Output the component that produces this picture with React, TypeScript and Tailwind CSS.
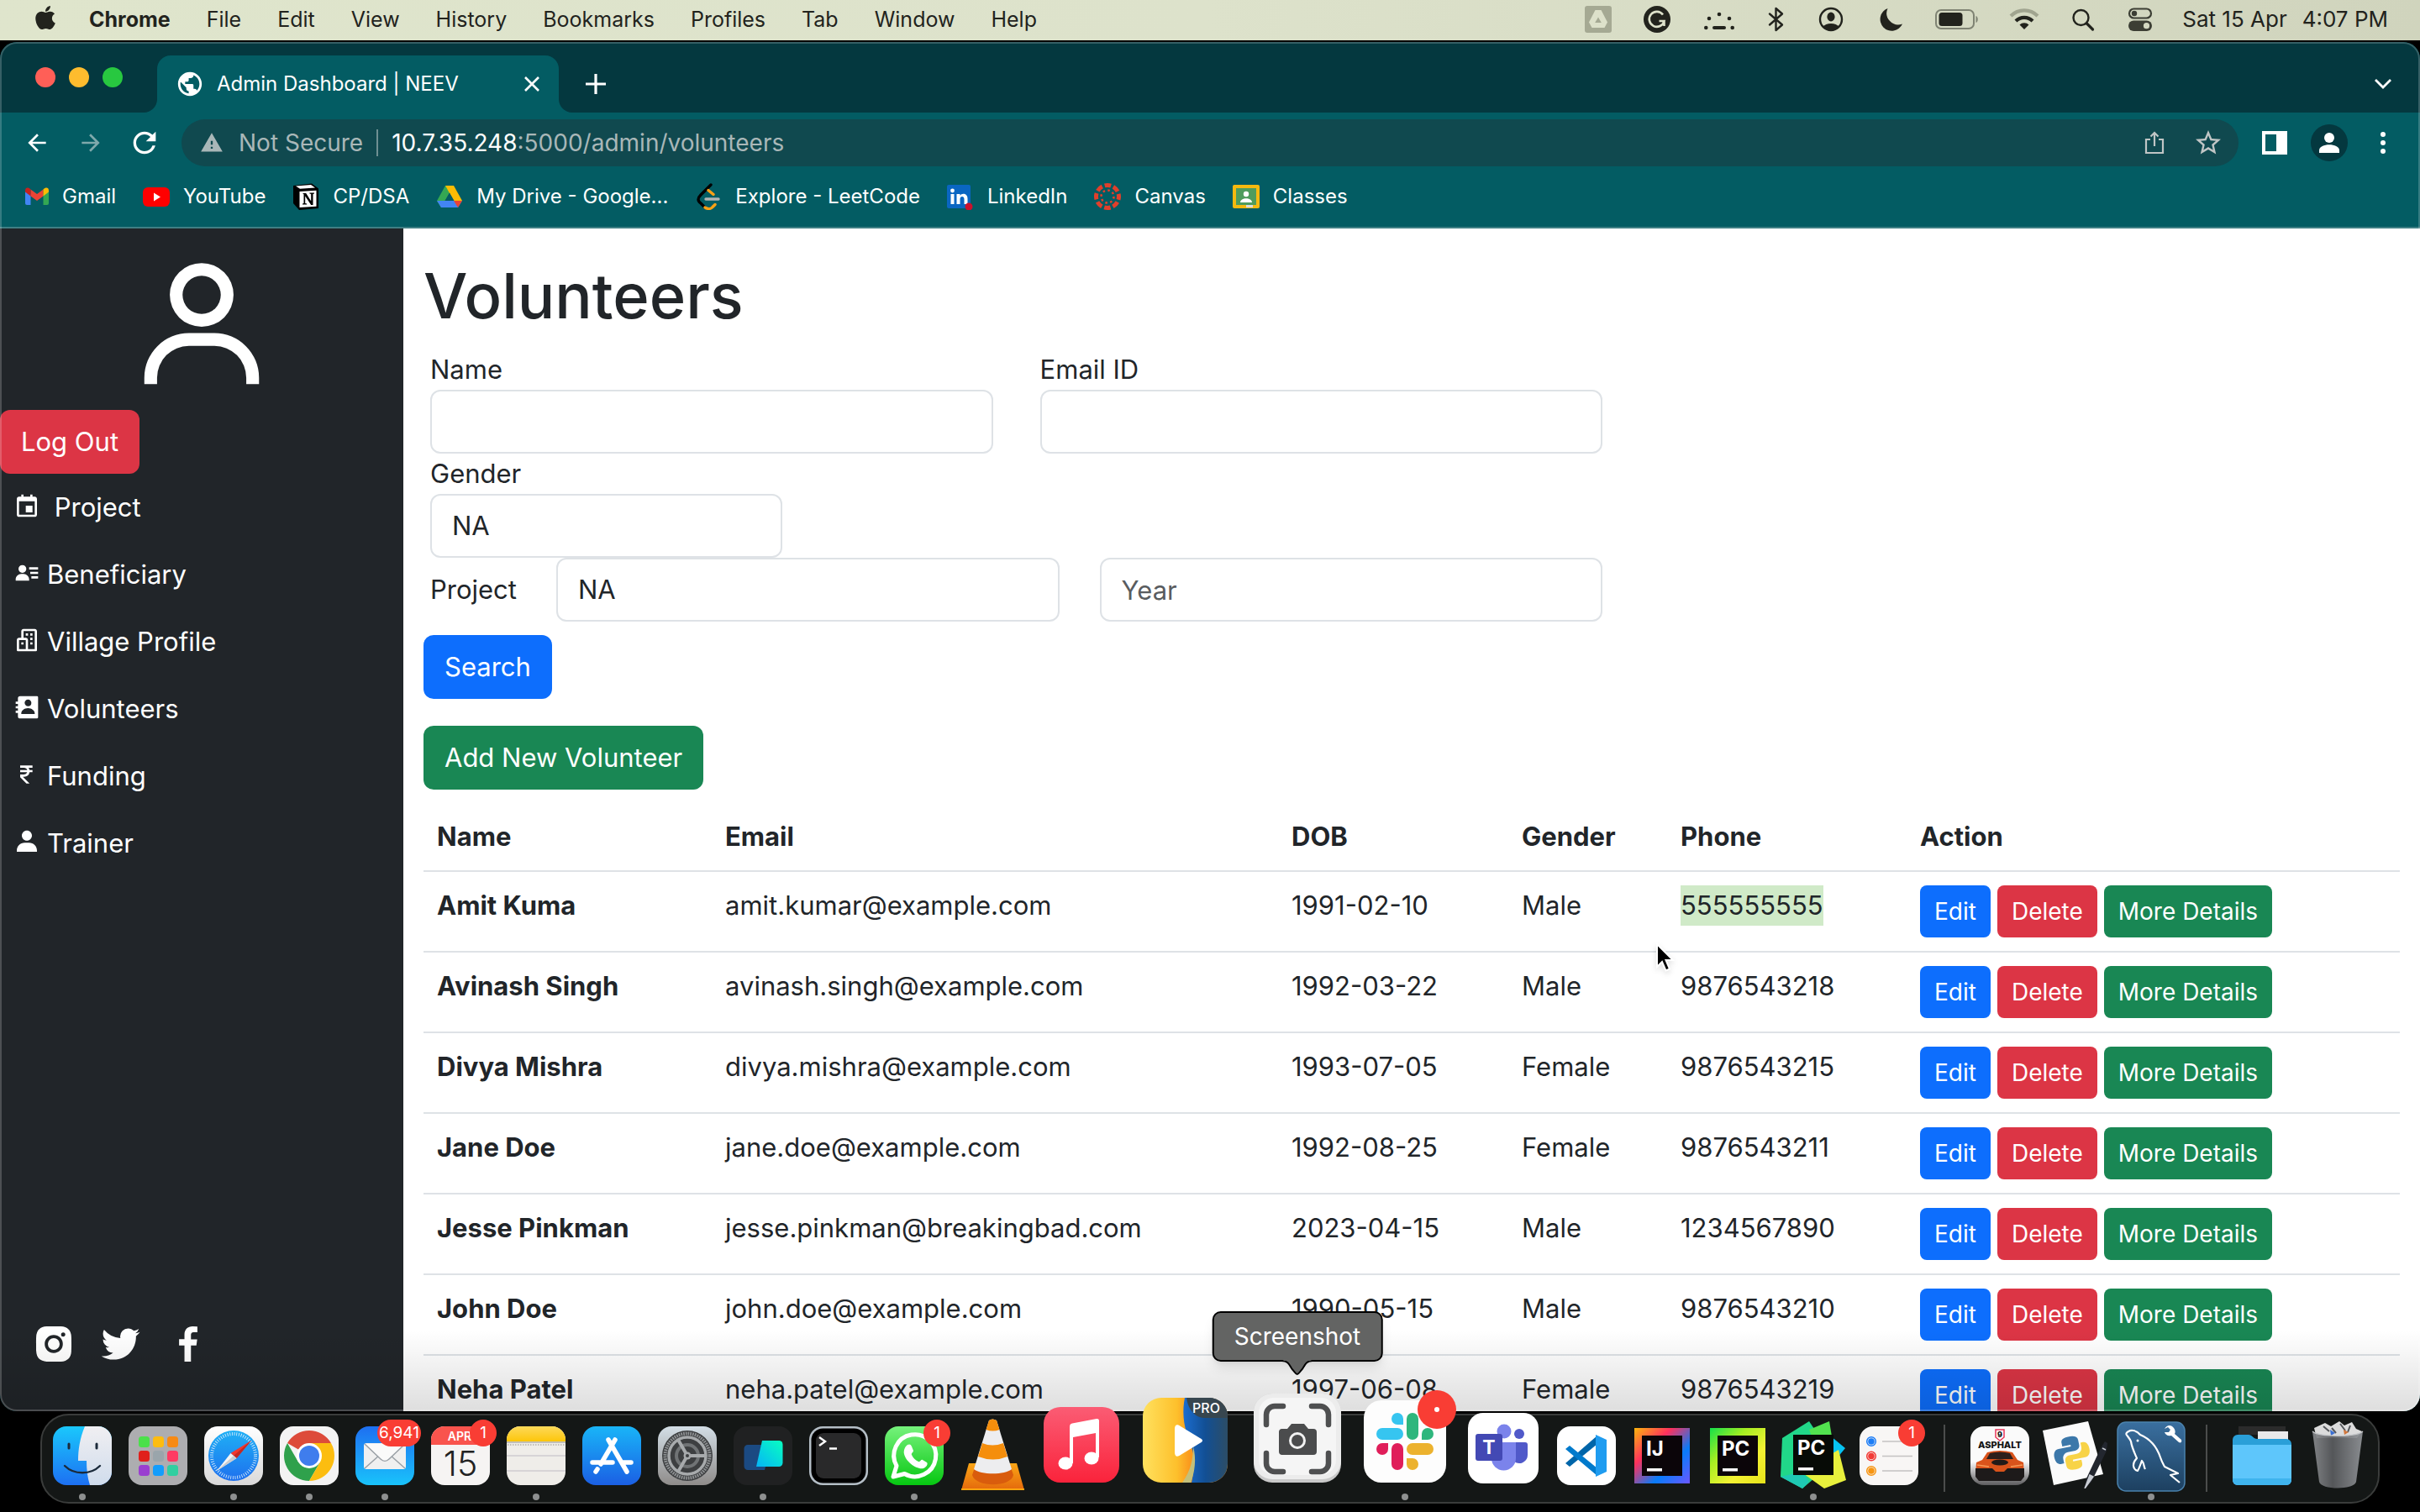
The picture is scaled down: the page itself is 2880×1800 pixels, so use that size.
import React from "react";
import {
  BiBuildings,
  BiCalendarEvent,
  BiLogoFacebook,
  BiLogoInstagramAlt,
  BiLogoTwitter,
  BiRupee,
  BiSolidContact,
  BiSolidUser,
  BiSolidUserDetail,
  BiUser,
} from "react-icons/bi";
import { FaApple } from "react-icons/fa";
import {
  MdArrowBack,
  MdArrowForward,
  MdRefresh,
  MdStarOutline,
  MdWarning,
  MdPublic,
} from "react-icons/md";

/* ---------- Menu bar ---------- */

const menus = ["File", "Edit", "View", "History", "Bookmarks", "Profiles", "Tab", "Window", "Help"];

function StatusIcons() {
  return (
    <>
      <svg className="h-8 w-8" viewBox="0 0 32 32" aria-hidden="true">
        <rect width="32" height="32" rx="3" fill="#a5a993" />
        <path d="M12.500 5h7L27 19.500l-3.500 6.500h-15L5 19.500z" fill="#dde1ca" />
        <path d="M16 13.500l3.800 6.500h-7.600z" fill="#a5a993" />
      </svg>
      <svg className="ml-[38px] h-8 w-8" viewBox="0 0 32 32" aria-hidden="true">
        <circle cx="16" cy="16" r="16" fill="#22231d" />
        <path d="M23 10.500A9 9 0 1 0 24.500 18h-6M24.500 18v6" fill="none" stroke="#dde1ca" strokeWidth="2.600" />
      </svg>
      <svg className="ml-10 h-8 w-9" viewBox="0 0 36 32" fill="#22231d" aria-hidden="true">
        <circle cx="18" cy="10" r="2.300" />
        <circle cx="6" cy="15" r="2.300" />
        <circle cx="30" cy="15" r="2.300" />
        <circle cx="2.300" cy="26" r="2.300" />
        <circle cx="33.700" cy="26" r="2.300" />
        <rect x="10" y="24" width="16" height="4" rx="2" />
      </svg>
      <svg className="ml-10 h-8 w-5" viewBox="0 0 20 32" fill="none" stroke="#22231d" strokeWidth="2.400" strokeLinejoin="round" strokeLinecap="round" aria-hidden="true">
        <path d="M2 9.500l15 13L9.500 29V3L17 9.500 2 22.500" />
      </svg>
      <svg className="ml-[39px] h-8 w-8" viewBox="0 0 32 32" aria-hidden="true">
        <circle cx="16" cy="16" r="13" fill="none" stroke="#22231d" strokeWidth="2.400" />
        <ellipse cx="16" cy="13" rx="4.600" ry="5.400" fill="#22231d" />
        <path d="M6.500 25a10.500 7 0 0 1 19 0A13 13 0 0 1 6.500 25z" fill="#22231d" />
      </svg>
      <svg className="ml-10 h-8 w-8" viewBox="0 0 32 32" fill="#22231d" aria-hidden="true">
        <path d="M11.500 3A13.800 13.800 0 1 0 29 21.500 13.800 13.800 0 0 1 11.500 3z" />
      </svg>
      <svg className="ml-9 h-8 w-[52px]" viewBox="0 0 52 32" aria-hidden="true">
        <rect x="1" y="5" width="45" height="22" rx="6" fill="none" stroke="#7f8373" strokeWidth="2" />
        <rect x="4.500" y="8" width="28" height="16" rx="3.500" fill="#22231d" />
        <path d="M48.500 12v8c3-1 3-7 0-8z" fill="#7f8373" />
      </svg>
      <svg className="ml-9 h-8 w-9" viewBox="0 0 36 32" fill="none" strokeWidth="4.200" aria-hidden="true">
        <path d="M2 12a22.500 22.500 0 0 1 32 0" stroke="#a0a48f" />
        <path d="M8 18a14 14 0 0 1 20 0" stroke="#22231d" />
        <path d="M18 28l-5.500-5.500a7.700 7.700 0 0 1 11 0z" fill="#22231d" stroke="none" />
      </svg>
      <svg className="ml-9 h-8 w-8" viewBox="0 0 32 32" fill="none" stroke="#22231d" strokeLinecap="round" aria-hidden="true">
        <circle cx="13.500" cy="14" r="9" strokeWidth="2.400" />
        <path d="M20.500 21l7 7" strokeWidth="3.200" />
      </svg>
      <svg className="ml-9 h-8 w-8" viewBox="0 0 32 32" aria-hidden="true">
        <rect x="3" y="3.500" width="26" height="11" rx="5.500" fill="none" stroke="#3c3e34" strokeWidth="2.200" />
        <circle cx="9" cy="9" r="3.200" fill="#3c3e34" />
        <rect x="2" y="17.500" width="28" height="12.500" rx="6.200" fill="#3c3e34" />
        <circle cx="23.500" cy="23.700" r="3.600" fill="#d4d8c1" />
      </svg>
    </>
  );
}

function MenuBar() {
  return (
    <header className="flex h-12 shrink-0 items-center bg-linear-to-r from-[#dfe5cc] via-[#dde2cb] to-[#d0d4bd] pr-[38px] pb-0.5 pl-[38px] text-[25px] leading-8 text-[#22231d]">
      <FaApple className="mb-1 h-8 w-8" />
      <nav className="ml-9 flex gap-[43px]">
        <button className="font-bold">Chrome</button>
        {menus.map((m) => (
          <button key={m}>{m}</button>
        ))}
      </nav>
      <div className="ml-auto flex items-center text-[26px]">
        <StatusIcons />
        <span className="ml-[34px]">Sat 15 Apr</span>
        <span className="ml-[18px]">4:07 PM</span>
      </div>
    </header>
  );
}

/* ---------- Browser chrome ---------- */

function TabStrip() {
  return (
    <div className="flex h-21 items-end bg-[#04383f] pl-[42px] text-white">
      <div className="flex gap-4 self-center">
        <button aria-label="Close window" className="size-6 rounded-full bg-[#ff5f57]" />
        <button aria-label="Minimise window" className="size-6 rounded-full bg-[#febc2e]" />
        <button aria-label="Zoom window" className="size-6 rounded-full bg-[#28c840]" />
      </div>
      <div className="relative ml-[41px] flex h-17 w-[478px] items-center rounded-t-2xl bg-[#035c63] pr-5 pl-[22px]">
        <svg className="absolute bottom-0 -left-4 size-4 text-[#035c63]" viewBox="0 0 16 16" aria-hidden="true">
          <path d="M16 0v16H0A16 16 0 0 0 16 0z" fill="currentColor" />
        </svg>
        <svg className="absolute -right-4 bottom-0 size-4 text-[#035c63]" viewBox="0 0 16 16" aria-hidden="true">
          <path d="M0 0v16h16A16 16 0 0 1 0 0z" fill="currentColor" />
        </svg>
        <MdPublic className="size-[34px]" />
        <span className="ml-[15px] text-[24px] leading-8">Admin Dashboard | NEEV</span>
        <button aria-label="Close tab" className="ml-auto">
          <svg className="size-6" viewBox="0 0 24 24" stroke="currentColor" strokeWidth="2.600" aria-hidden="true">
            <path d="M4 4l16 16M20 4L4 20" />
          </svg>
        </button>
      </div>
      <button aria-label="New tab" className="ml-8 flex h-17 items-center">
        <svg className="size-6" viewBox="0 0 24 24" stroke="currentColor" strokeWidth="3.200" aria-hidden="true">
          <path d="M12 0v24M0 12h24" />
        </svg>
      </button>
      <button aria-label="Search tabs" className="mr-[34px] ml-auto flex h-17 items-center">
        <svg className="h-3 w-5" viewBox="0 0 20 12" fill="none" stroke="currentColor" strokeWidth="2.800" aria-hidden="true">
          <path d="M1 1l9 9 9-9" />
        </svg>
      </button>
    </div>
  );
}

function Toolbar() {
  return (
    <div className="flex h-18 items-center pr-[41px] pl-7 text-white">
      <button aria-label="Back"><MdArrowBack className="size-8" /></button>
      <button aria-label="Forward" className="ml-8 text-[#7fa9ac]"><MdArrowForward className="size-8" /></button>
      <button aria-label="Reload" className="ml-7"><MdRefresh className="size-10" /></button>
      <div className="ml-6 flex h-14 flex-1 items-center rounded-full bg-[#10494f] pr-[18px] pl-[22px] text-[28px] leading-8 text-[#a9b7b8]">
        <MdWarning className="size-7" />
        <span className="ml-[18px]">Not Secure</span>
        <span className="mr-4 ml-4 h-8 w-0.5 bg-[#6f9093]" />
        <input
          aria-label="Address"
          className="sr-only"
          readOnly
          value="10.7.35.248:5000/admin/volunteers"
        />
        <span>
          <span className="text-white">10.7.35.248</span>:5000/admin/volunteers
        </span>
        <button aria-label="Share" className="ml-auto">
          <svg className="size-7" viewBox="0 0 28 28" fill="none" stroke="#c0c5c5" strokeWidth="2.200" aria-hidden="true">
            <path d="M9 10H4v16h20V10h-5M14 18V2M9.500 6.500L14 2l4.500 4.500" />
          </svg>
        </button>
        <button aria-label="Bookmark this tab" className="ml-8 text-[#c0c5c5]"><MdStarOutline className="size-9" /></button>
      </div>
      <button aria-label="Side panel" className="ml-7">
        <svg className="h-7 w-[30px]" viewBox="0 0 30 28" aria-hidden="true">
          <path d="M0 0h30v28H0zM4 4v20h13V4z" fill="currentColor" fillRule="evenodd" />
        </svg>
      </button>
      <button aria-label="Profile" className="ml-7 flex size-11 items-center justify-center rounded-full bg-[#04383f]">
        <svg className="size-6" viewBox="0 0 24 24" fill="currentColor" aria-hidden="true">
          <circle cx="12" cy="6" r="6" />
          <path d="M0 24v-3c0-9 24-9 24 0v3z" />
        </svg>
      </button>
      <button aria-label="Menu" className="ml-[39px] flex flex-col gap-1">
        <span className="size-1.5 rounded-full bg-white" />
        <span className="size-1.5 rounded-full bg-white" />
        <span className="size-1.5 rounded-full bg-white" />
      </button>
    </div>
  );
}

const bookmarkIcons: Record<string, React.ReactNode> = {
  gmail: (
    <svg className="h-8 w-7" viewBox="0 0 28 32">
      <path d="M0 9v15a2 2 0 0 0 2 2h4.500V13z" fill="#4285f4" />
      <path d="M28 9v15a2 2 0 0 1-2 2h-4.500V13z" fill="#34a853" />
      <path d="M6.500 7.500L14 13l7.500-5.500v8L14 21l-7.500-5.500z" fill="#ea4335" />
      <path d="M0 9c0-4 3.500-4.500 6.500-1.500v8L0 10.500z" fill="#c5221f" />
      <path d="M28 9c0-4-3.500-4.500-6.500-1.500v8l6.500-5z" fill="#fbbc04" />
    </svg>
  ),
  youtube: (
    <svg className="h-8 w-8" viewBox="0 0 32 32">
      <rect y="5" width="32" height="23" rx="6" fill="#f00" />
      <path d="M13 11.500l8 5-8 5z" fill="#fff" />
    </svg>
  ),
  notion: (
    <svg className="h-8 w-8" viewBox="0 0 32 32">
      <path d="M1 3l22-2.500 8 6V30L8 32l-7-8z" fill="#000" />
      <path d="M4 3.500l18-1.500 5 3.500-18 1.200z" fill="#fff" />
      <path d="M8.500 10L28.500 8.800v19L8.500 29z" fill="#fff" />
      <path d="M12 12h4.200l6 9.500v-8.500l-1.800-.5v-1h5.600v1l-1.500.5V26h-2.300l-7-10.500V24l2 .5v1H12v-1l1.500-.5V13.300z" fill="#000" />
    </svg>
  ),
  drive: (
    <svg className="h-8 w-8" viewBox="0 0 32 32">
      <path d="M11 3h10L6 29 1 21z" fill="#34a853" />
      <path d="M11 3h10l10 18H21z" fill="#fbbc04" />
      <path d="M1 21h30l-5 8H6z" fill="#4285f4" />
      <path d="M21 21h10l-5 8z" fill="#ea4335" />
      <path d="M16 11.500L10.500 21h11z" fill="#035c63" />
    </svg>
  ),
  leetcode: (
    <svg className="h-8 w-8" viewBox="0 0 32 32" fill="none" strokeLinecap="round" strokeWidth="3.400">
      <path d="M19 2L7 14c-4 4-4 7 0 10l5 5" stroke="#000" />
      <path d="M12 29c3 2 7 2 9-.5l3-3M16 8.500l6 5" stroke="#ffa116" />
      <path d="M13 19h15" stroke="#b3b3b3" />
    </svg>
  ),
  linkedin: (
    <svg className="h-8 w-8" viewBox="0 0 32 32">
      <rect y="2" width="28" height="28" rx="2" fill="#0a66c2" />
      <g fill="#fff">
        <circle cx="6.500" cy="9" r="2.400" />
        <path d="M4.500 13h4v12h-4zM11.500 13h4v2c2-3.500 9-3 9 3.500V25h-4v-6c0-4-5-4-5 0v6h-4z" />
      </g>
      <circle cx="26" cy="28" r="4.500" fill="#cb112d" />
    </svg>
  ),
  canvas: (
    <svg className="h-8 w-8" viewBox="0 0 32 32">
      <circle cx="16" cy="16" r="13.500" fill="none" stroke="#e13f2b" strokeWidth="5" strokeDasharray="7.600 3" strokeDashoffset="3.800" />
      <circle cx="16" cy="16" r="7.500" fill="none" stroke="#e13f2b" strokeWidth="2.600" strokeDasharray="2.600 3.290" />
    </svg>
  ),
  classes: (
    <svg className="h-8 w-8" viewBox="0 0 32 32">
      <rect y="2" width="32" height="28" rx="2" fill="#f6b90f" />
      <rect x="4" y="6" width="24" height="20" fill="#4f9c5c" />
      <circle cx="16" cy="13" r="3.200" fill="#fff" />
      <path d="M9 23c0-6.500 14-6.500 14 0z" fill="#fff" />
      <path d="M16 26h8v3h-8z" fill="#dcdcdc" />
    </svg>
  ),
};

const bookmarks = [
  ["gmail", "Gmail"],
  ["youtube", "YouTube"],
  ["notion", "CP/DSA"],
  ["drive", "My Drive - Google..."],
  ["leetcode", "Explore - LeetCode"],
  ["linkedin", "LinkedIn"],
  ["canvas", "Canvas"],
  ["classes", "Classes"],
];

function BookmarksBar() {
  return (
    <nav className="flex h-[66px] items-center gap-8 border-b-2 border-[#3f7f84] pb-2 pl-[30px] text-[24px] leading-8 text-white">
      {bookmarks.map(([key, label]) => (
        <a key={key} href="#" className="flex items-center gap-4">
          {bookmarkIcons[key]}
          {label}
        </a>
      ))}
    </nav>
  );
}

/* ---------- Admin page ---------- */

const navItems = [
  { label: "\u00a0Project", Icon: BiCalendarEvent },
  { label: "Beneficiary", Icon: BiSolidUserDetail },
  { label: "Village Profile", Icon: BiBuildings },
  { label: "Volunteers", Icon: BiSolidContact },
  { label: "Funding", Icon: BiRupee },
  { label: "Trainer", Icon: BiSolidUser },
];

function Sidebar() {
  return (
    <aside className="flex w-120 shrink-0 flex-col items-start bg-[#212529] pt-[26px] pb-[52px] text-[31px] leading-12 text-white">
      <BiUser className="size-[182px] self-center" />
      <button className="mt-2 h-19 rounded-xl bg-[#dc3545] px-[25px]">Log Out</button>
      <nav className="flex flex-col">
        {navItems.map(({ label, Icon }) => (
          <a key={label} href="#" className="flex h-20 items-center gap-2 pl-4">
            <Icon className="mb-1 size-8" />
            {label}
          </a>
        ))}
      </nav>
      <div className="mt-auto flex gap-6 pl-9">
        <a href="#" aria-label="Instagram"><BiLogoInstagramAlt className="size-14" /></a>
        <a href="#" aria-label="Twitter"><BiLogoTwitter className="size-14" /></a>
        <a href="#" aria-label="Facebook"><BiLogoFacebook className="size-14" /></a>
      </div>
    </aside>
  );
}

const control =
  "block h-19 w-full appearance-none rounded-xl border-2 border-[#dee2e6] bg-white px-6 text-[#212529] placeholder-[#595c5f]";

function FilterForm() {
  return (
    <form className="mt-4" onSubmit={(e) => e.preventDefault()}>
      <div className="w-3/5 px-2">
        <div className="grid grid-cols-2 gap-14">
          <div>
            <label htmlFor="name" className="block">Name</label>
            <input id="name" className={control} />
          </div>
          <div>
            <label htmlFor="email" className="block">Email ID</label>
            <input id="email" type="email" className={control} />
          </div>
        </div>
        <div className="w-[30%]">
          <label htmlFor="gender" className="block">Gender</label>
          <select id="gender" className={control}>
            <option>NA</option>
            <option>Male</option>
            <option>Female</option>
          </select>
        </div>
        <div className="flex items-center">
          <label htmlFor="project" className="w-[150px] shrink-0">Project</label>
          <div className="grid flex-1 grid-cols-2 gap-12">
            <select id="project" className={control}>
              <option>NA</option>
            </select>
            <input aria-label="Year" placeholder="Year" className={control} />
          </div>
        </div>
      </div>
      <button className="mt-4 block h-19 rounded-xl bg-[#0d6efd] px-[25px] text-white">Search</button>
    </form>
  );
}

const volunteers = [
  ["Amit Kuma", "amit.kumar@example.com", "1991-02-10", "Male", "555555555"],
  ["Avinash Singh", "avinash.singh@example.com", "1992-03-22", "Male", "9876543218"],
  ["Divya Mishra", "divya.mishra@example.com", "1993-07-05", "Female", "9876543215"],
  ["Jane Doe", "jane.doe@example.com", "1992-08-25", "Female", "9876543211"],
  ["Jesse Pinkman", "jesse.pinkman@breakingbad.com", "2023-04-15", "Male", "1234567890"],
  ["John Doe", "john.doe@example.com", "1990-05-15", "Male", "9876543210"],
  ["Neha Patel", "neha.patel@example.com", "1997-06-08", "Female", "9876543219"],
];

function Pointer() {
  return (
    <svg className="absolute top-[84px] -left-[14px] z-10 h-9 w-6 drop-shadow-md" viewBox="0 0 24 36" aria-hidden="true">
      <path d="M2 2v27l6-6 4.500 10.500 4.500-2L12.500 21H21z" fill="#000" stroke="#fff" strokeWidth="2" />
    </svg>
  );
}

function VolunteerTable() {
  return (
    <table className="mt-4 w-full table-fixed text-left">
      <thead>
        <tr className="h-[81px] border-b-2 border-[#dee2e6]">
          <th className="w-[343px] px-4 font-bold">Name</th>
          <th className="w-[674px] px-4 font-bold">Email</th>
          <th className="w-[274px] px-4 font-bold">DOB</th>
          <th className="w-[189px] px-4 font-bold">Gender</th>
          <th className="w-[285px] px-4 font-bold">Phone</th>
          <th className="px-4 font-bold">Action</th>
        </tr>
      </thead>
      <tbody>
        {volunteers.map(([name, email, dob, gender, phone], i) => (
          <tr key={name} className="border-b-2 border-[#dee2e6] align-top">
            <th scope="row" className="p-4 font-bold">{name}</th>
            <td className="p-4">{email}</td>
            <td className="p-4">{dob}</td>
            <td className="p-4">{gender}</td>
            <td className="relative p-4">
              {i === 0 ? <span className="inline-block bg-[#d0eac8]">{phone}</span> : phone}
              {i === 0 && <Pointer />}
            </td>
            <td className="p-4">
              <div className="flex gap-2 text-[28px] text-white">
                <button className="h-[62px] rounded-lg bg-[#0d6efd] px-[17px]">Edit</button>
                <button className="h-[62px] rounded-lg bg-[#dc3545] px-[17px]">Delete</button>
                <button className="h-[62px] rounded-lg bg-[#198754] px-[17px]">More Details</button>
              </div>
            </td>
          </tr>
        ))}
      </tbody>
    </table>
  );
}

function BrowserWindow() {
  return (
    <div className="relative mt-0.5 flex min-h-0 flex-1 flex-col overflow-hidden rounded-[20px] bg-[#035c63]">
      <TabStrip />
      <Toolbar />
      <BookmarksBar />
      <div className="flex min-h-0 flex-1">
        <Sidebar />
        <main className="flex-1 overflow-hidden bg-white px-6 pt-8 text-[31px] leading-12 text-[#212529]">
          <h1 className="text-[74px] leading-24 font-medium">Volunteers</h1>
          <FilterForm />
          <button className="mt-8 block h-19 rounded-xl bg-[#198754] px-[25px] text-white">Add New Volunteer</button>
          <VolunteerTable />
        </main>
      </div>
      <div className="pointer-events-none absolute inset-x-0 bottom-0 h-24 bg-linear-to-t from-black/13 to-transparent" />
      <div className="pointer-events-none absolute inset-0 rounded-[20px] border-2 border-white/20" />
    </div>
  );
}

/* ---------- Dock ---------- */

const tile = "size-[70px]";

function Finder() {
  return (
    <svg className={tile} viewBox="0 0 70 70">
      <defs>
        <linearGradient id="finderA" x1="0" y1="0" x2="0" y2="1"><stop stopColor="#1ac8fc" /><stop offset="1" stopColor="#1d70f2" /></linearGradient>
        <linearGradient id="finderB" x1="0" y1="0" x2="0" y2="1"><stop stopColor="#f0eff2" /><stop offset="1" stopColor="#d0dcec" /></linearGradient>
        <clipPath id="finderC"><rect width="70" height="70" rx="16" /></clipPath>
      </defs>
      <g clipPath="url(#finderC)">
        <rect width="70" height="70" fill="url(#finderA)" />
        <path d="M38 0c-6 14-8 28-8 41h10c0 10 1 20 4 29h26V0z" fill="url(#finderB)" />
      </g>
      <path d="M19 21v5M52 21v5" stroke="#1b2a3a" strokeWidth="3" strokeLinecap="round" />
      <path d="M14 47c11 11 31 11 42 0" fill="none" stroke="#1b2a3a" strokeWidth="2.400" strokeLinecap="round" />
    </svg>
  );
}

const padColors = ["#4be04b", "#fdbc10", "#f78a14", "#e0201c", "#9aa5ab", "#ff3b63", "#9a3fd0", "#149dfc", "#30cfa0"];

function Launchpad() {
  return (
    <svg className={tile} viewBox="0 0 70 70">
      <rect width="70" height="70" rx="16" fill="#adadb0" />
      {padColors.map((c, i) => (
        <rect key={c} x={12 + (i % 3) * 17} y={12 + Math.floor(i / 3) * 17} width="13" height="13" rx="3.500" fill={c} />
      ))}
    </svg>
  );
}

function Safari() {
  return (
    <svg className={tile} viewBox="0 0 70 70">
      <defs>
        <linearGradient id="safA" x1="0" y1="0" x2="0" y2="1"><stop stopColor="#fff" /><stop offset="1" stopColor="#d9d9d9" /></linearGradient>
        <linearGradient id="safB" x1="0" y1="0" x2="0" y2="1"><stop stopColor="#1fb0f5" /><stop offset="1" stopColor="#1e70ee" /></linearGradient>
      </defs>
      <rect width="70" height="70" rx="16" fill="url(#safA)" />
      <circle cx="35" cy="35" r="30" fill="url(#safB)" />
      <circle cx="35" cy="35" r="26" fill="none" stroke="#cfe8fb" strokeWidth="4" strokeDasharray="0.900 1.820" />
      <path d="M56 17L38.500 38 31.500 32z" fill="#f2382f" />
      <path d="M56 17L38.500 38 35 35z" fill="#c22a25" />
      <path d="M15 53l16.500-21 7 6z" fill="#f4f4f4" />
      <path d="M15 53l20-18 3.500 3z" fill="#c9ccd0" />
    </svg>
  );
}

function Chrome() {
  return (
    <svg className={tile} viewBox="0 0 70 70">
      <rect width="70" height="70" rx="16" fill="#f3f3f3" />
      <path d="M35 35L9.020 20A30 30 0 0 1 60.980 20H35z" fill="#dd4b3a" />
      <path d="M9.020 20A30 30 0 0 0 35 65l13-22.500-26 0z" fill="#2fa14c" />
      <path d="M60.980 20A30 30 0 0 1 35 65l13-22.500V20z" fill="#fcbd10" />
      <path d="M35 20h26l-13 24z" fill="#fcbd10" />
      <circle cx="35" cy="35" r="15" fill="#fff" />
      <circle cx="35" cy="35" r="12" fill="#3f7ded" />
    </svg>
  );
}

function Mail() {
  return (
    <svg className={tile} viewBox="0 0 70 70">
      <defs><linearGradient id="mailA" x1="0" y1="0" x2="0" y2="1"><stop stopColor="#1e6ff1" /><stop offset="1" stopColor="#19c3fb" /></linearGradient></defs>
      <rect width="70" height="70" rx="16" fill="url(#mailA)" />
      <rect x="10" y="20" width="50" height="31" rx="3" fill="#f0f0f0" />
      <path d="M11 50l18-16M59 50L41 34" stroke="#9aa0a6" strokeWidth="1.500" />
      <path d="M11 21l19 18c3 3 7 3 10 0l19-18" fill="#fafafa" stroke="#9aa0a6" strokeWidth="1.500" />
    </svg>
  );
}

function Calendar() {
  return (
    <svg className={tile} viewBox="0 0 70 70">
      <clipPath id="calC"><rect width="70" height="70" rx="16" /></clipPath>
      <g clipPath="url(#calC)">
        <rect width="70" height="70" fill="#f6f4f3" />
        <rect width="70" height="22" fill="#f9544d" />
      </g>
      <text x="34" y="17" textAnchor="middle" fontSize="14" fontWeight="600" fill="#fff">APR</text>
      <text x="35" y="59" textAnchor="middle" fontSize="41" fontWeight="300" fill="#222">15</text>
    </svg>
  );
}

function Notes() {
  return (
    <svg className={tile} viewBox="0 0 70 70">
      <defs><linearGradient id="noteA" x1="0" y1="0" x2="0" y2="1"><stop stopColor="#fdd95a" /><stop offset="1" stopColor="#fdc60a" /></linearGradient></defs>
      <clipPath id="noteC"><rect width="70" height="70" rx="16" /></clipPath>
      <g clipPath="url(#noteC)">
        <rect width="70" height="70" fill="#efede9" />
        <rect width="70" height="18" fill="url(#noteA)" />
        <path d="M0 19h70" stroke="#b2afa8" strokeWidth="1.500" />
        <path d="M1 22h68" stroke="#b2afa8" strokeWidth="1.500" strokeDasharray="1.500 1.500" />
        <path d="M0 35h70M0 53h70" stroke="#cfccd0" strokeWidth="1.500" />
      </g>
    </svg>
  );
}

function AppStore() {
  return (
    <svg className={tile} viewBox="0 0 70 70">
      <defs><linearGradient id="storeA" x1="0" y1="0" x2="0" y2="1"><stop stopColor="#19b5f8" /><stop offset="1" stopColor="#1b5fe4" /></linearGradient></defs>
      <rect width="70" height="70" rx="16" fill="url(#storeA)" />
      <g stroke="#fff" strokeWidth="5.500" strokeLinecap="round">
        <path d="M39 16L22 45M31 16l22 38M12 43h24M47 43h11M18 51l-2 3" />
      </g>
    </svg>
  );
}

function Settings() {
  return (
    <svg className={tile} viewBox="0 0 70 70">
      <defs><linearGradient id="setA" x1="0" y1="0" x2="0" y2="1"><stop stopColor="#d3dee6" /><stop offset="1" stopColor="#8f8c8a" /></linearGradient></defs>
      <rect width="70" height="70" rx="16" fill="url(#setA)" />
      <circle cx="35" cy="35" r="30" fill="#3d3f41" />
      <circle cx="35" cy="35" r="26.500" fill="none" stroke="#8f9294" strokeWidth="4" strokeDasharray="1.700 1.070" />
      <circle cx="35" cy="35" r="22" fill="none" stroke="#a7aaac" strokeWidth="3.500" />
      <circle cx="35" cy="35" r="13" fill="none" stroke="#707375" strokeWidth="4" />
      <path d="M35 35h22M35 35L24 16M35 35L24 54" stroke="#a7aaac" strokeWidth="4" />
      <circle cx="35" cy="35" r="4.500" fill="#a7aaac" />
      <circle cx="35" cy="35" r="2" fill="#3d3f41" />
    </svg>
  );
}

function Warp() {
  return (
    <svg className={tile} viewBox="0 0 70 70">
      <defs><linearGradient id="warpA" x1="0" y1="1" x2="1" y2="0"><stop stopColor="#05b4f7" /><stop offset="1" stopColor="#08ffc0" /></linearGradient></defs>
      <rect width="70" height="70" rx="16" fill="#202122" />
      <path d="M17 22h16v30H17a4.500 4.500 0 0 1-4.500-4.500v-21A4.500 4.500 0 0 1 17 22zM30 48h8l-1 4h-7z" fill="#1b4a82" />
      <path d="M34 17h20a4.500 4.500 0 0 1 4.500 4.500v22A4.500 4.500 0 0 1 54 48H27z" fill="url(#warpA)" />
    </svg>
  );
}

function Terminal() {
  return (
    <svg className={tile} viewBox="0 0 70 70">
      <rect width="70" height="70" rx="16" fill="#b4bec6" />
      <rect x="2.500" y="2.500" width="65" height="65" rx="14" fill="#000" />
      <rect x="8" y="8" width="54" height="54" rx="9" fill="#29292a" />
      <path d="M12 13l7 5-7 5M24 26.500h9" fill="none" stroke="#fff" strokeWidth="2.400" />
    </svg>
  );
}

function WhatsApp() {
  return (
    <svg className={tile} viewBox="0 0 70 70">
      <defs><linearGradient id="waA" x1="0" y1="0" x2="0" y2="1"><stop stopColor="#76f27c" /><stop offset="1" stopColor="#06c711" /></linearGradient></defs>
      <rect width="70" height="70" rx="16" fill="url(#waA)" />
      <path d="M10 60l4-13a25 25 0 1 1 9.500 9.500z" fill="none" stroke="#fff" strokeWidth="5" strokeLinejoin="round" />
      <path d="M27 22c2-1 4-1 5 2l2 5c0 2-3 3-2 5 2 4 4 6 8 8 2 1 3-3 5-2l5 3c2 2-1 6-4 7-8 2-21-8-23-17-1-4 1-9 4-11z" fill="#fff" />
    </svg>
  );
}

function Vlc() {
  return (
    <svg className="h-[85px] w-[75px]" viewBox="0 0 75 85">
      <defs><linearGradient id="vlcA" x1="0" y1="0" x2="0" y2="1"><stop stopColor="#fba616" /><stop offset="1" stopColor="#e4680c" /></linearGradient></defs>
      <path d="M9 53h57l9 32H0z" fill="url(#vlcA)" />
      <path d="M0 83h75v2H0z" fill="#ffa50f" />
      <path d="M13 67c4 15 46 15 49 0l-4-12H17z" fill="#d95c0d" />
      <path d="M33 2q4-3 9 0l18 58c-8 7-37 7-45 0z" fill="#ededef" />
      <path d="M33 2q4-3 9 0l3.500 11q-8 3-16 0zM25 29q12 5 25 0l5 16q-17 7-35 0z" fill="#f58e0c" />
    </svg>
  );
}

function Music() {
  return (
    <svg className="size-[90px]" viewBox="0 0 90 90">
      <defs><linearGradient id="musA" x1="0" y1="0" x2="0" y2="1"><stop stopColor="#fb5c74" /><stop offset="1" stopColor="#fa233b" /></linearGradient></defs>
      <rect width="90" height="90" rx="20" fill="url(#musA)" />
      <path d="M31 24c0-3 1-4 3-4.500L63 14c2-.4 3 .5 3 2.500V60h-4V31l-27 5v31h-4z" fill="#fff" />
      <ellipse cx="26" cy="67" rx="8.500" ry="7.500" fill="#fff" />
      <ellipse cx="57" cy="61" rx="8.500" ry="7.500" fill="#fff" />
    </svg>
  );
}

function Player() {
  return (
    <svg className="size-[101px]" viewBox="0 0 101 101">
      <defs>
        <linearGradient id="plA" x1="0" x2="1"><stop stopColor="#ffe15e" /><stop offset=".4" stopColor="#fdc02c" /><stop offset=".55" stopColor="#fb9a1e" /></linearGradient>
        <linearGradient id="plB" x1="0" x2="1"><stop stopColor="#1b6dd0" /><stop offset=".5" stopColor="#124f94" /><stop offset="1" stopColor="#2c4d66" /></linearGradient>
        <clipPath id="plC"><rect width="101" height="101" rx="22" /></clipPath>
      </defs>
      <g clipPath="url(#plC)">
        <rect width="101" height="101" fill="url(#plA)" />
        <path d="M48 0h53v101H58c6-25 2-40-4-54C48 32 47 14 50 0z" fill="url(#plB)" />
        <path d="M60 58c4 15 2 30-3 43H47c10-14 13-28 13-43z" fill="#c4c07a" />
        <path d="M52 0h49v24H74C62 24 54 14 52 0z" fill="#37464f" />
      </g>
      <text x="59" y="18" fontSize="16" fontWeight="500" fill="#fff">PRO</text>
      <path d="M38 37c0-5 3-6 7-3l23 14c4 2 4 4 0 6L45 68c-4 3-7 2-7-3z" fill="#fff" />
    </svg>
  );
}

function ScreenshotApp() {
  return (
    <svg className="h-[106px] w-[104px]" viewBox="0 0 104 106">
      <rect width="104" height="106" rx="22" fill="#c9c9c9" />
      <rect width="104" height="102" rx="22" fill="#ececec" />
      <rect x="6" y="5" width="92" height="92" rx="18" fill="#f5f5f5" />
      <g fill="none" stroke="#4e4f50" strokeWidth="6.500" strokeLinecap="round">
        <path d="M15 37V25a10 10 0 0 1 10-10h10M69 15h10a10 10 0 0 1 10 10v12M89 71v12a10 10 0 0 1-10 10H69M35 93H25a10 10 0 0 1-10-10V71" />
      </g>
      <path d="M33 42h7l5-6h15l5 6h6a4 4 0 0 1 4 4v23a4 4 0 0 1-4 4H34a4 4 0 0 1-4-4V46a4 4 0 0 1 3-4z" fill="#4b4c4d" />
      <circle cx="52" cy="56" r="8.500" fill="none" stroke="#f2f2f2" strokeWidth="3" />
    </svg>
  );
}

function Slack() {
  return (
    <svg className="size-[98px]" viewBox="0 0 98 98">
      <rect width="98" height="98" rx="21" fill="#fdfdfd" />
      <g fill="#36c5f0">
        <rect x="15" y="33" width="32" height="14" rx="7" />
        <path d="M47 29V22a7 7 0 1 0-7 7z" />
      </g>
      <g fill="#2eb67d">
        <rect x="51" y="15" width="14" height="32" rx="7" />
        <path d="M69 47h7a7 7 0 1 0-7-7z" />
      </g>
      <g fill="#ecb22e">
        <rect x="51" y="51" width="32" height="14" rx="7" />
        <path d="M51 69v7a7 7 0 1 0 7-7z" />
      </g>
      <g fill="#e01e5a">
        <rect x="33" y="51" width="14" height="32" rx="7" />
        <path d="M29 51h-7a7 7 0 1 0 7 7z" />
      </g>
    </svg>
  );
}

function Teams() {
  return (
    <svg className="size-[84px]" viewBox="0 0 84 84">
      <rect width="84" height="84" rx="18" fill="#fff" />
      <circle cx="43" cy="22" r="8.500" fill="#7b83eb" />
      <circle cx="61" cy="25" r="6" fill="#5059c9" />
      <path d="M55 35h13a3 3 0 0 1 3 3v12a10 10 0 0 1-16 8z" fill="#5059c9" />
      <path d="M30 35h27v19a14.500 14.500 0 0 1-29 0z" fill="#7b83eb" />
      <rect x="9" y="25" width="32" height="32" rx="3" fill="#4349b4" />
      <text x="25" y="49" textAnchor="middle" fontSize="23" fontWeight="700" fill="#fff">T</text>
    </svg>
  );
}

function VsCode() {
  return (
    <svg className={tile} viewBox="0 0 70 70">
      <rect width="70" height="70" rx="16" fill="#fff" />
      <path d="M10 44l5 4 33-27V11z" fill="#0065a9" />
      <path d="M10 27l5-4 33 27v9z" fill="#007acc" />
      <path d="M46 10l13 6v38l-13 6z" fill="#1f9cf0" />
    </svg>
  );
}

function Ide({ id, label, stops }: { id: string; label: string; stops: string[] }) {
  return (
    <svg className="mb-0.5 size-[66px]" viewBox="0 0 66 66">
      <defs>
        <linearGradient id={id} x1="0" y1="0" x2="1" y2="1">
          {stops.map((s, i) => (
            <stop key={s} offset={i / (stops.length - 1)} stopColor={s} />
          ))}
        </linearGradient>
      </defs>
      <rect width="66" height="66" fill={`url(#${id})`} />
      <rect x="9" y="9" width="48" height="48" fill="#0b0509" />
      <text x="14" y="33" fontSize="24" fontWeight="700" fill="#fff">{label}</text>
      <rect x="15" y="48" width="18" height="3.500" fill="#fff" />
    </svg>
  );
}

function PyCharm() {
  return (
    <svg className="-mb-1 h-20 w-[78px]" viewBox="0 0 78 80">
      <path d="M2 20L34 0l12 18-6 50-14 12L0 66z" fill="#21d789" />
      <path d="M34 10L58 0l3 18-20 10z" fill="#52e34f" />
      <path d="M60 18l17 14-10 12H56z" fill="#07c3f2" />
      <path d="M24 60l45-26 9 36-26 10z" fill="#e8f03c" />
      <path d="M0 66l26-6 8 12-8 8z" fill="#1fc9b4" />
      <rect x="15" y="16" width="48" height="48" fill="#070b06" />
      <text x="20" y="40" fontSize="24" fontWeight="700" fill="#fff">PC</text>
      <rect x="21" y="55" width="18" height="3.500" fill="#fff" />
    </svg>
  );
}

function Reminders() {
  return (
    <svg className={tile} viewBox="0 0 70 70">
      <rect width="70" height="70" rx="16" fill="#f8f6f5" />
      {["#1c7df6", "#f23b36", "#f79512"].map((c, i) => (
        <g key={c}>
          <circle cx="14" cy={18 + i * 17.5} r="5.300" fill="none" stroke={c} strokeWidth="1.500" />
          <circle cx="14" cy={18 + i * 17.5} r="3.800" fill={c} />
          <path d={`M27 ${18 + i * 17.5}h36`} stroke="#c4c2c2" strokeWidth="1.500" />
        </g>
      ))}
    </svg>
  );
}

function Asphalt() {
  return (
    <svg className={tile} viewBox="0 0 70 70">
      <defs><linearGradient id="aspA" x1="0" y1="0" x2="0" y2="1"><stop offset=".6" stopColor="#fafafa" /><stop offset="1" stopColor="#5c5c5e" /></linearGradient></defs>
      <rect width="70" height="70" rx="16" fill="url(#aspA)" />
      <path d="M30 4h10v9l-5 4-5-4z" fill="#fff" stroke="#e8365b" strokeWidth="1.500" />
      <text x="35" y="13" textAnchor="middle" fontSize="9" fontWeight="800" fill="#111">9</text>
      <text x="35" y="26" textAnchor="middle" fontSize="11" fontWeight="800" fill="#111">ASPHALT</text>
      <path d="M20 31q15-4 30 0l6 9 7 3 1 14-4 7H10l-4-7 1-14 7-3z" fill="#d9531b" />
      <path d="M23 32q12-3 24 0l4 7H19z" fill="#2d201c" />
      <path d="M6 50h20l4 4h10l4-4h20v10l-4 5H10l-4-5z" fill="#1d1a1a" />
      <ellipse cx="35" cy="43" rx="10" ry="3.500" fill="#231a18" />
      <path d="M8 46l14 2M62 46l-14 2" stroke="#f79a56" strokeWidth="1.500" />
    </svg>
  );
}

function Python() {
  return (
    <svg className="-mb-1 size-20" viewBox="0 0 80 80">
      <path d="M1 11L55 0l18 63-59 13z" fill="#fbfbfb" />
      <g transform="translate(13 15) rotate(-12 22 22)">
        <path d="M22 3c-9 0-9 4-9 6v4h10v2H8c-5 0-7 4-7 9s2 9 6 9h4v-5c0-4 3-7 7-7h9c3 0 6-2 6-6V9c0-4-4-6-11-6z" fill="#3c78aa" />
        <path d="M23 43c9 0 9-4 9-6v-4H22v-2h15c5 0 7-4 7-9s-2-9-6-9h-3v5c0 4-3 7-7 7h-9c-3 0-6 2-6 6v6c0 4 4 6 10 6z" fill="#f8d347" />
      </g>
      <path d="M75 24l3 2-1 9-18 37-8 8 2-12 17-36z" fill="#23272f" />
      <path d="M72 32l4 2M57 64l4 2-10 14z" stroke="#c9cdd4" strokeWidth="1.500" fill="#c9cdd4" />
    </svg>
  );
}

function MySql() {
  return (
    <svg className="-mb-2 h-[84px] w-[82px]" viewBox="0 0 82 84">
      <defs><linearGradient id="sqlA" x1="0" y1="0" x2="0" y2="1"><stop stopColor="#3a6f9f" /><stop offset="1" stopColor="#1d4060" /></linearGradient></defs>
      <rect x="1" y="1" width="80" height="82" rx="10" fill="url(#sqlA)" stroke="#4a82ad" strokeWidth="1.500" />
      <path d="M11 15c4-6 12-5 17 1 12 5 20 15 24 27 2 6 4 9 5 11l16 8-9 2 11 9M11 15c2 3 5 6 6 9 1 7 4 13 7 20-6 6-5 13 1 15 2-3 3-7 5-12 3 3 2 7 4 10" fill="none" stroke="#fff" strokeWidth="2.200" strokeLinejoin="round" />
      <circle cx="25" cy="23" r="1.500" fill="#fff" />
      <path d="M57 9c3-5 8-5 11-1 2 3 2 5 1 7l8 7c1 3-1 4-3 3l-9-8c-4 1-7-1-8-4l5 0 2-3-3-3z" fill="#fff" />
    </svg>
  );
}

function Folder() {
  return (
    <svg className={tile} viewBox="0 0 70 70">
      <path d="M7 0h56v10H7z" fill="#2b2b2b" />
      <path d="M30 6h36v14H30z" fill="#e9e9ea" />
      <path d="M0 16a6 6 0 0 1 6-6h13c4 0 6 5 10 5h35a6 6 0 0 1 6 6v40H0z" fill="#2a9fd8" />
      <path d="M0 22h70v42a6 6 0 0 1-6 6H6a6 6 0 0 1-6-6z" fill="#5ec6fb" />
      <path d="M0 62h70v2a6 6 0 0 1-6 6H6a6 6 0 0 1-6-6z" fill="#3fb4ee" />
    </svg>
  );
}

function Trash() {
  return (
    <svg className="-mb-1 h-20 w-[62px]" viewBox="0 0 62 80">
      <defs><linearGradient id="trA" x1="0" x2="1"><stop stopColor="#8a8c8f" /><stop offset=".4" stopColor="#5a5c5f" /><stop offset="1" stopColor="#93969a" /></linearGradient></defs>
      <path d="M3 8L16 2l7 4 10-6 6 5 9-4 5 8 7 3-6 8H6z" fill="#dcdcdc" />
      <path d="M14 6l7 6M34 3l6 8M24 8l5 6M46 5l-3 8" stroke="#55585c" strokeWidth="2" />
      <path d="M22 10l6 4-5 3z" fill="#3b6fd1" />
      <path d="M38 10l6 3-5 3z" fill="#d1763b" />
      <path d="M1 12c8 7 52 7 60 0l-8 60c-2 10-42 10-44 0z" fill="url(#trA)" opacity=".92" />
      <path d="M1 12c8 7 52 7 60 0" fill="none" stroke="#c5c7ca" strokeWidth="1.500" />
    </svg>
  );
}

function Tooltip({ children }: { children: React.ReactNode }) {
  return (
    <span className="absolute bottom-full left-1/2 mb-16 -translate-x-1/2 rounded-[10px] border-2 border-black bg-[#636463] px-6 py-2.5 text-[28px] leading-9 text-white shadow-lg">
      {children}
      <svg className="absolute top-full left-1/2 h-[18px] w-9 -translate-x-1/2" viewBox="0 0 36 18" aria-hidden="true">
        <path d="M0 1c8 0 9 6 12 10 3 3 4 6 6 6s3-3 6-6c3-4 4-10 12-10V-2H0z" fill="#636463" stroke="#000" strokeWidth="2" />
        <path d="M2-2h32v3H2z" fill="#636463" />
      </svg>
    </span>
  );
}

type DockItem = {
  name: string;
  icon: React.ReactNode;
  cell?: string;
  badge?: React.ReactNode;
  badgeShape?: string;
  running?: boolean;
  tooltip?: boolean;
};

const roundBadge = "-top-2 -right-2 size-8";

const dockGroups: DockItem[][] = [
  [
    { name: "Finder", icon: <Finder />, running: true },
    { name: "Launchpad", icon: <Launchpad /> },
    { name: "Safari", icon: <Safari />, running: true },
    { name: "Google Chrome", icon: <Chrome />, running: true },
    { name: "Mail", icon: <Mail />, running: true, badge: "6,941", badgeShape: "-top-2 -right-2 h-8 w-13" },
    { name: "Calendar", icon: <Calendar />, badge: "1", badgeShape: roundBadge },
    { name: "Notes", icon: <Notes />, running: true },
    { name: "App Store", icon: <AppStore /> },
    { name: "System Settings", icon: <Settings /> },
    { name: "Warp", icon: <Warp />, running: true },
    { name: "Terminal", icon: <Terminal /> },
    { name: "WhatsApp", icon: <WhatsApp />, running: true, badge: "1", badgeShape: roundBadge },
    { name: "VLC", icon: <Vlc />, cell: "w-24 pb-3.5" },
    { name: "Music", icon: <Music />, cell: "w-[116px] pb-[23px]" },
    { name: "Player", icon: <Player />, cell: "w-[130px] pb-[23px]" },
    { name: "Screenshot", icon: <ScreenshotApp />, cell: "w-[138px] pb-[23px]", tooltip: true },
    {
      name: "Slack",
      icon: <Slack />,
      cell: "w-[118px] pb-[23px]",
      running: true,
      badge: <span className="size-1.5 rounded-full bg-white" />,
      badgeShape: "-top-3 -right-3 size-[46px]",
    },
    { name: "Teams", icon: <Teams />, cell: "w-28 pb-[22px] pl-1" },
    { name: "Visual Studio Code", icon: <VsCode /> },
    { name: "IntelliJ IDEA", icon: <Ide id="ijA" label="IJ" stops={["#fdb60d", "#fe315d", "#087cfa", "#6b57ff"]} /> },
    { name: "PyCharm CE", icon: <Ide id="pcA" label="PC" stops={["#14e04a", "#a6ee22", "#f4f233", "#e6e21a"]} /> },
    { name: "PyCharm", icon: <PyCharm />, running: true },
    { name: "Reminders", icon: <Reminders />, badge: "1", badgeShape: roundBadge },
  ],
  [
    { name: "Asphalt 9", icon: <Asphalt /> },
    { name: "Python", icon: <Python /> },
    { name: "MySQL Workbench", icon: <MySql />, running: true },
  ],
  [
    { name: "Documents", icon: <Folder /> },
    { name: "Trash", icon: <Trash /> },
  ],
];

function Dock() {
  return (
    <footer className="relative z-10 mx-auto mt-[3px] mb-2.5 flex h-[107px] shrink-0 rounded-[34px] border-2 border-[#3a3c3b] bg-[#141716] px-[3px]">
      {dockGroups.map((group, g) => (
        <React.Fragment key={g}>
          {g > 0 && <span className="mx-5 mt-[11px] h-20 w-0.5 bg-[#4b4d4c]" />}
          <ul className="flex">
            {group.map((item) => (
              <li
                key={item.name}
                className={`relative flex h-full flex-col items-center justify-end ${item.cell ?? "w-[90px] pb-5"}`}
              >
                <button aria-label={item.name} className="relative">
                  {item.icon}
                  {item.badge && (
                    <span className={`absolute flex items-center justify-center rounded-full bg-[#f93d34] text-[19px] leading-6 text-white ${item.badgeShape}`}>
                      {item.badge}
                    </span>
                  )}
                </button>
                {item.tooltip && <Tooltip>{item.name}</Tooltip>}
                {item.running && <span className="absolute bottom-0.5 size-2 rounded-full bg-[#8e9090]" />}
              </li>
            ))}
          </ul>
        </React.Fragment>
      ))}
    </footer>
  );
}

export default function App() {
  return (
    <div className="flex h-screen flex-col overflow-hidden bg-black font-['Inter',sans-serif]">
      <MenuBar />
      <BrowserWindow />
      <Dock />
    </div>
  );
}
